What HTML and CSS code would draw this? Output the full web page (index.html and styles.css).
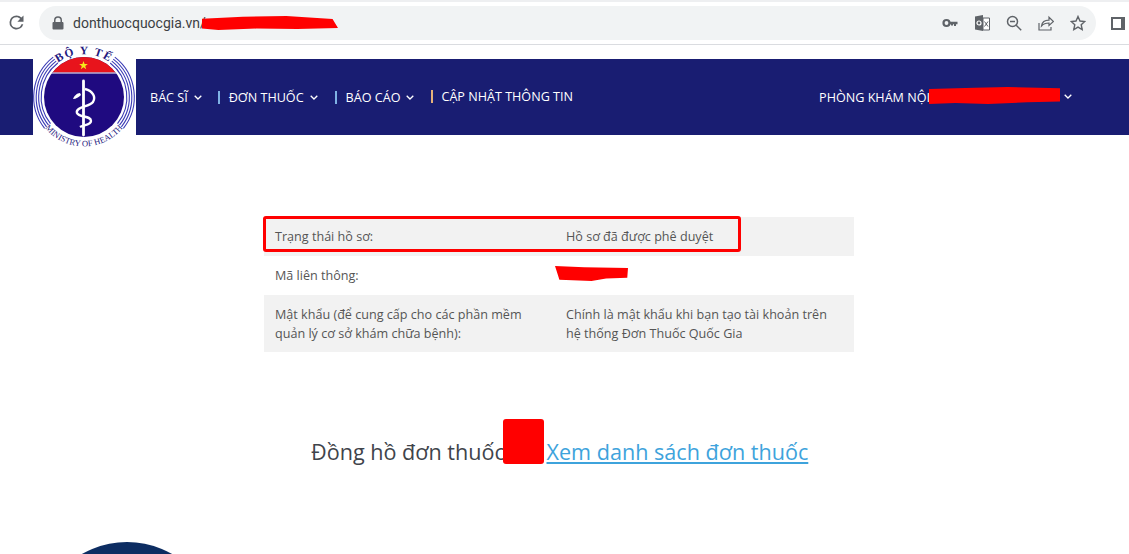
FILE: index.html
```html
<!DOCTYPE html>
<html lang="vi">
<head>
    <meta charset="UTF-8">
    <title>Đơn thuốc quốc gia</title>
    <link rel="stylesheet" href="styles.css">
</head>
<body>

<div class="browser-bar">
    <svg class="reload" width="21" height="21" viewBox="0 0 24 24"><path fill="#5f6368" d="M17.65 6.35A7.95 7.95 0 0 0 12 4a8 8 0 1 0 7.75 10h-2.08A6 6 0 1 1 12 6c1.66 0 3.14.69 4.22 1.78L13 11h7V4z"/></svg>
    <div class="omnibox">
        <svg class="lock" width="12" height="14" viewBox="0 0 12 14"><path fill="#5f6368" d="M2 6V4.2a4 4 0 0 1 8 0V6h.6c.5 0 .9.4.9.9v5.7c0 .5-.4.9-.9.9H1.400c-.5 0-.9-.4-.9-.9V6.900c0-.5.4-.9.9-.9zm1.500 0h5V4.200a2.500 2.500 0 0 0-5 0z"/></svg>
        <span class="url">donthuocquocgia.vn/</span>
        <div class="omni-icons">
            <svg width="16" height="16" viewBox="0 0 16 16"><circle cx="4.500" cy="8" r="3" fill="none" stroke="#5f6368" stroke-width="2.200"/><path fill="#5f6368" d="M7 6.800h8.500v2.400H14v1.800h-2V9.200h-1v1.300H9V9.200H7z"/></svg>
            <svg width="16" height="16" viewBox="0 0 16 16"><path fill="#5f6368" d="M1 1.500 9 0v16l-8-1.500z"/><path fill="#fff" stroke="#5f6368" d="M9 3h6.500v12H9z"/><circle cx="5" cy="8" r="2" fill="none" stroke="#fff" stroke-width="1.200"/><path stroke="#5f6368" fill="none" d="m10.500 6.500 3.500 5m0-5-3.500 5"/></svg>
            <svg width="16" height="16" viewBox="0 0 16 16"><circle cx="6.500" cy="6.500" r="5" fill="none" stroke="#5f6368" stroke-width="1.500"/><path stroke="#5f6368" stroke-width="1.500" d="M4 6.500h5M10.200 10.200l5 5"/></svg>
            <svg width="16" height="16" viewBox="0 0 16 16"><path fill="none" stroke="#5f6368" stroke-width="1.200" d="M1 8v7h12v-3M3.500 11c.5-3.500 3.500-5.800 7.500-5.800V2.200l4.500 4.300L11 10.500V8C8 8 5.500 8.800 3.500 11z"/></svg>
            <svg width="16" height="16" viewBox="0 0 16 16"><path fill="none" stroke="#5f6368" stroke-width="1.400" d="m8 1.500 2 4.500 4.800.5-3.600 3.200 1 4.800L8 12.100l-4.200 2.400 1-4.800-3.600-3.200L6 6z"/></svg>
        </div>
    </div>
    <div class="side-panel"></div>
</div>

<header class="site-head">
    <nav class="main-nav">
        <a class="nav-item">BÁC SĨ <svg class="chev" viewBox="0 0 8 5"><path d="m.7.700 3.300 3.300L7.300.700"/></svg></a>
        <a class="nav-item bar wide">ĐƠN THUỐC <svg class="chev" viewBox="0 0 8 5"><path d="m.7.700 3.300 3.300L7.300.700"/></svg></a>
        <a class="nav-item bar wide">BÁO CÁO <svg class="chev" viewBox="0 0 8 5"><path d="m.7.700 3.300 3.300L7.300.700"/></svg></a>
        <a class="nav-item bar orange">CẬP NHẬT THÔNG TIN</a>
    </nav>
    <a class="clinic">PHÒNG KHÁM NỘI <span class="clinic-name"></span> <svg class="chev" viewBox="0 0 8 5"><path d="m.7.700 3.300 3.300L7.300.700"/></svg></a>

    <div class="logo">
        <svg width="103" height="105" viewBox="0 0 103 105">
            <defs>
                <path id="arcTop" d="M13 31A44 44 0 0 1 89 31"/>
                <path id="arcBot" d="M8 77A50 50 0 0 0 94 77"/>
                <clipPath id="discClip"><circle cx="51" cy="52" r="40"/></clipPath>
            </defs>
            <g fill="none" stroke="#3b3bb5" stroke-width="1.100">
                <path d="M24.800 18A43 43 0 0 0 17.500 78.700M23.200 16.100A45.500 45.500 0 0 0 15.500 80.200M21.700 14.100A48 48 0 0 0 13.600 81.800M20.200 12.100A50.500 50.500 0 0 0 11.600 83.300"/>
                <path d="M77.200 18A43 43 0 0 1 84.500 78.700M78.800 16.100A45.500 45.500 0 0 1 86.500 80.200M80.300 14.100A48 48 0 0 1 88.400 81.800M81.800 12.100A50.500 50.500 0 0 1 90.400 83.300"/>
            </g>
            <circle cx="51" cy="52" r="40" fill="#1f0a80"/>
            <rect x="0" y="10" width="103" height="17.500" fill="#e8141c" clip-path="url(#discClip)"/>
            <rect x="10" y="27.500" width="82" height="1" fill="#fff" clip-path="url(#discClip)"/>
            <path fill="#f4ea1a" d="m50.500 16 1.100 3h3.300l-2.700 2 1 3.200-2.700-2-2.700 2 1-3.200-2.700-2h3.300z"/>
            <path stroke="#fff" stroke-width="2.800" fill="none" stroke-linecap="round" d="M50.500 36V90"/>
            <path stroke="#fff" stroke-width="2.400" fill="none" d="M52 44C60 46 63 52 60 57 56 62 42 62 44 68 46 73 58 70 58 76 58 80 50 80 47 82"/>
            <path fill="#fff" d="M47 48c-3 0-6 3-7 6 3 0 6-2 8-4z"/>
            <text class="logo-top"><textPath href="#arcTop" startOffset="50%" text-anchor="middle">BỘ Y TẾ</textPath></text>
            <text class="logo-bot"><textPath href="#arcBot" startOffset="50%" text-anchor="middle">MINISTRY OF HEALTH</textPath></text>
        </svg>
    </div>
</header>

<main class="content">
    <div class="info-table">
        <div class="info-row shade">
            <div>Trạng thái hồ sơ:</div>
            <div>Hồ sơ đã được phê duyệt</div>
        </div>
        <div class="info-row">
            <div>Mã liên thông:</div>
            <div></div>
        </div>
        <div class="info-row shade last">
            <div>Mật khẩu (để cung cấp cho các phần mềm quản lý cơ sở khám chữa bệnh):</div>
            <div>Chính là mật khẩu khi bạn tạo tài khoản trên hệ thống Đơn Thuốc Quốc Gia</div>
        </div>
    </div>

    <h2 class="clock">Đồng hồ đơn thuốc <span class="clock-gap"></span><a class="clock-link">Xem danh sách đơn thuốc</a></h2>
    <div class="round-badge"></div>
</main>

<!-- vùng che thông tin, vẽ đè lên trang -->
<div class="mark mark-url"></div>
<div class="mark mark-clinic"></div>
<div class="mark mark-code"></div>
<div class="mark mark-count"></div>
<div class="highlight"></div>

</body>
</html>
```

FILE: styles.css
```css
html, body {
    height: 554px;
    overflow: hidden;
}

body {
    margin: 0;
    position: relative;
    background: #fff;
    font-family: 'Open Sans', 'Noto Sans', sans-serif;
    color: #444;
}

.browser-bar {
    height: 45px;
    box-sizing: border-box;
    padding-top: 4px;
    display: flex;
    align-items: flex-start;
    border-top: 2px solid #eeeff1;
    border-bottom: 1px solid #dadce0;
}

.reload {
    margin: 6px 12px 0 6px;
}

.omnibox {
    width: 1057px;
    height: 34px;
    background: #f1f3f4;
    border-radius: 17px;
    display: flex;
    align-items: center;
    box-sizing: border-box;
    padding-left: 13px;
}

.lock {
    margin-right: 9px;
}

.url {
    font-family: 'Roboto', sans-serif;
    font-size: 14px;
    color: #3c4043;
}

.omni-icons {
    margin-left: auto;
    margin-right: 10px;
    display: flex;
    gap: 16px;
}

.side-panel {
    width: 8px;
    height: 9px;
    border: 2px solid #5f6368;
    border-right-width: 4px;
    margin: 11px 0 0 15px;
}

.site-head {
    margin-top: 14px;
    height: 76px;
    background: #191d72;
    display: flex;
    align-items: center;
    position: relative;
    padding-left: 150px;
    color: #fff;
    font-size: 12.600px;
}

.main-nav {
    display: flex;
    align-items: center;
}

.nav-item {
    display: flex;
    align-items: center;
    gap: 6px;
    margin-right: 16px;
    white-space: nowrap;
}

.nav-item.wide {
    margin-right: 17px;
}

.nav-item.bar::before {
    content: '';
    width: 2px;
    height: 13px;
    background: #7fb2e5;
    margin-right: 3px;
}

.nav-item.orange {
    margin-bottom: 2px;
}

.nav-item.orange::before {
    background: #e6b27a;
    margin-right: 2px;
}

.chev {
    width: 8px;
    height: 5px;
    fill: none;
    stroke: #fff;
    stroke-width: 1.300;
}

.clinic {
    margin-left: auto;
    margin-right: 57px;
    display: flex;
    align-items: center;
    white-space: nowrap;
}

.clinic .chev {
    margin-bottom: 2px;
}

.clinic-name {
    width: 134px;
}

.logo {
    position: absolute;
    left: 33px;
    top: -14px;
    width: 103px;
    height: 105px;
    background: #fff;
}

.logo svg {
    overflow: visible;
}

.logo-top {
    font-family: 'Liberation Serif', serif;
    font-size: 11.500px;
    font-weight: bold;
    letter-spacing: 1.500px;
    fill: #1f1a80;
}

.logo-bot {
    font-family: 'Liberation Serif', serif;
    font-size: 8.500px;
    fill: #1f1a80;
}

.content {
    height: 419px;
    box-sizing: border-box;
    overflow: hidden;
    display: flex;
    flex-direction: column;
    align-items: flex-start;
    padding: 82px 0 0 264px;
}

.info-table {
    width: 590px;
    font-size: 12.600px;
    line-height: 19px;
    color: #555;
}

.info-row {
    display: grid;
    grid-template-columns: 291px 1fr;
    padding: 10px 11px;
    min-height: 19px;
}

.info-row > div:first-child {
    padding-right: 19px;
}

.info-row.shade {
    background: #f2f2f2;
}

.info-row.last {
    padding-bottom: 9px;
}

.clock {
    margin: 85px 0 0 47px;
    font-size: 21.600px;
    font-weight: 400;
    line-height: 30px;
    color: #3f444b;
    white-space: nowrap;
}

.clock-gap {
    display: inline-block;
    width: 36px;
}

.clock-link {
    color: #3ea3dc;
    text-decoration: underline;
}

.round-badge {
    flex: none;
    width: 182px;
    height: 182px;
    border-radius: 50%;
    background: #0d2d62;
    margin: 75px 0 0 -228px;
}

.mark {
    position: absolute;
    background: #ff0000;
}

.mark-url {
    left: 202px;
    top: 16px;
    width: 136px;
    height: 14px;
    clip-path: polygon(0 20%, 30% 6%, 62% 0, 96% 22%, 100% 85%, 70% 92%, 40% 90%, 12% 100%, 0 90%);
}

.mark-clinic {
    left: 929px;
    top: 87px;
    width: 131px;
    height: 17px;
    clip-path: polygon(0 12%, 35% 4%, 60% 0, 100% 8%, 100% 85%, 75% 90%, 45% 100%, 20% 94%, 0 100%);
}

.mark-code {
    left: 555px;
    top: 266px;
    width: 73px;
    height: 15px;
    clip-path: polygon(0 0, 40% 8%, 100% 14%, 99% 78%, 70% 84%, 50% 100%, 6% 92%, 2% 30%);
}

.mark-count {
    left: 503px;
    top: 419px;
    width: 41px;
    height: 45px;
    border-radius: 3px;
}

.highlight {
    position: absolute;
    left: 263px;
    top: 216px;
    width: 472px;
    height: 30px;
    border: 3px solid #ff0000;
    border-radius: 3px;
}
```
